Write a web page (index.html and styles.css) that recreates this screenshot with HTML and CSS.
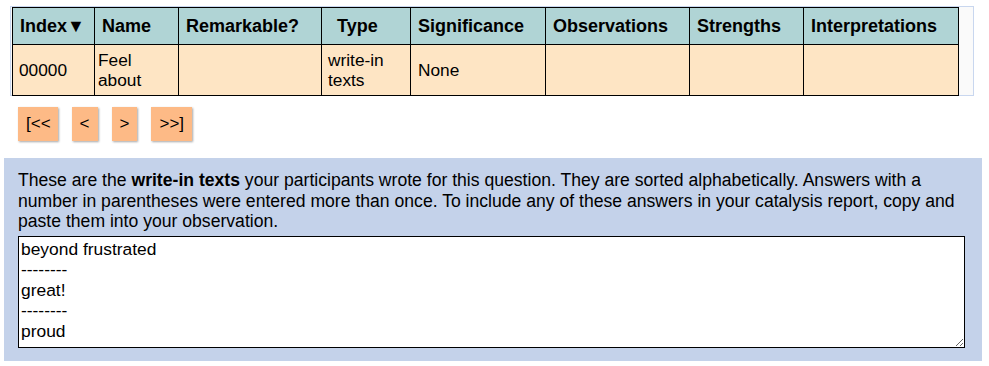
FILE: index.html
```html
<!DOCTYPE html>
<html lang="en">
<head>
    <meta charset="UTF-8">
    <title>Observations</title>
    <link rel="stylesheet" href="styles.css">
</head>
<body>
    <div class="grid-wrap">
        <table class="grid">
            <colgroup>
                <col style="width: 82px">
                <col style="width: 84px">
                <col style="width: 143px">
                <col style="width: 89px">
                <col style="width: 135px">
                <col style="width: 144px">
                <col style="width: 114px">
                <col style="width: 155px">
            </colgroup>
            <tr class="head-row">
                <th>Index&#9660;</th>
                <th>Name</th>
                <th>Remarkable?</th>
                <th class="type-head">Type</th>
                <th>Significance</th>
                <th>Observations</th>
                <th>Strengths</th>
                <th>Interpretations</th>
            </tr>
            <tr class="data-row">
                <td>00000</td>
                <td class="name-cell">Feel about</td>
                <td></td>
                <td>write-in texts</td>
                <td class="sig-cell">None</td>
                <td></td>
                <td></td>
                <td></td>
            </tr>
        </table>
    </div>

    <div class="pager">
        <button>[&lt;&lt;</button>
        <button>&lt;</button>
        <button>&gt;</button>
        <button>&gt;&gt;]</button>
    </div>

    <div class="panel">
        <p>These are the <b>write-in texts</b> your participants wrote for this question. They are sorted alphabetically. Answers with a number in parentheses were entered more than once. To include any of these answers in your catalysis report, copy and paste them into your observation.</p>
        <textarea class="answers">beyond frustrated
--------
great!
--------
proud</textarea>
    </div>
</body>
</html>
```

FILE: styles.css
```css
body {
    font-family: "Liberation Sans", Arial, sans-serif;
    font-size: 17.3px;
    color: #000;
    background-color: #fff;
    margin: 0;
    padding: 0;
}
.grid-wrap {
    margin: 6px 0 0 10px;
    width: 962px;
    height: 88px;
    border: 1px solid #c9d7ef;
    background-color: #fafafa;
}
.grid {
    border-collapse: collapse;
    table-layout: fixed;
    width: 947px;
    margin-left: 1px;
    border: 1px solid #000;
}
.grid th,
.grid td {
    border: 1px solid #000;
    text-align: left;
    vertical-align: middle;
    line-height: 20px;
    padding: 0 6px;
}
.grid th {
    background-color: #b0d4d5;
    font-size: 18px;
    font-weight: bold;
    padding-left: 7px;
    white-space: nowrap;
}
.grid td {
    background-color: #fee5c4;
}
.head-row {
    height: 37px;
}
.data-row {
    height: 51px;
}
.grid th.type-head {
    padding-left: 15px;
}
.grid td.name-cell {
    padding-left: 3px;
}
.grid td.sig-cell {
    padding-left: 7px;
}
.pager {
    display: flex;
    gap: 14px;
    margin: 11px 0 0 18px;
}
.pager button {
    font-family: "Liberation Sans", Arial, sans-serif;
    font-size: 17px;
    color: #000;
    background-color: #fdba86;
    border: none;
    height: 34px;
    padding: 0 8px;
    box-shadow: 1px 1px 2px rgba(0, 0, 0, 0.35);
    cursor: pointer;
}
.pager button:first-child {
    padding: 0 7px 0 8px;
}
.panel {
    margin: 17px 0 0 4px;
    width: 978px;
    box-sizing: border-box;
    padding: 12px 17px 13px 14px;
    background-color: #c4d2ea;
}
.panel p {
    margin: 0 0 4px 0;
    font-size: 17.6px;
    line-height: 20.5px;
}
.answers {
    display: block;
    box-sizing: border-box;
    width: 947px;
    height: 112px;
    margin: 0;
    padding: 2px 2px;
    border: 1px solid #000;
    font-family: "Liberation Sans", Arial, sans-serif;
    font-size: 17.4px;
    line-height: 20.5px;
    color: #000;
    background-color: #fff;
    resize: both;
}
```
